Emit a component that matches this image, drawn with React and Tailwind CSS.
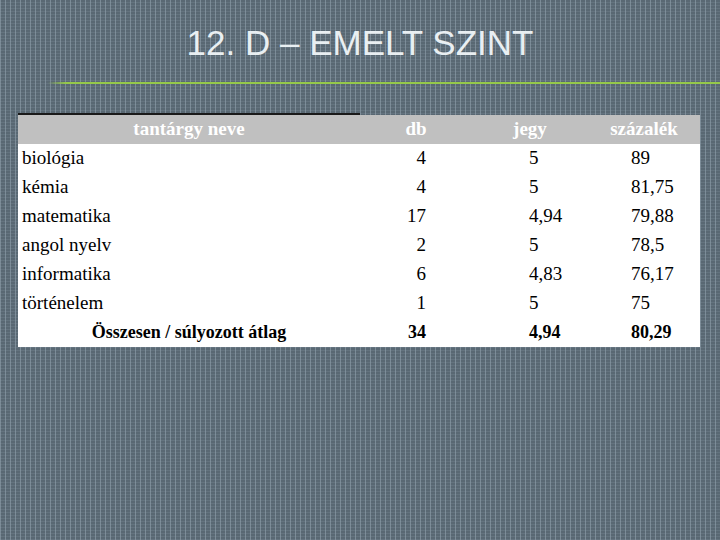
const rows = [
  { name: "biológia", db: "4", jegy: "5", pct: "89" },
  { name: "kémia", db: "4", jegy: "5", pct: "81,75" },
  { name: "matematika", db: "17", jegy: "4,94", pct: "79,88" },
  { name: "angol nyelv", db: "2", jegy: "5", pct: "78,5" },
  { name: "informatika", db: "6", jegy: "4,83", pct: "76,17" },
  { name: "történelem", db: "1", jegy: "5", pct: "75" },
];

const cols = "grid grid-cols-[342px_112px_116px_112px]";

export default function App() {
  return (
    <div className="w-[720px] h-[540px] overflow-hidden bg-[#596873] bg-[repeating-linear-gradient(90deg,rgba(145,162,174,0.6)_0px_1px,transparent_1px_5px),repeating-linear-gradient(0deg,rgba(120,136,148,0.35)_0px_1px,transparent_1px_3px)] flex flex-col">
      <h1 className="mt-[25px] h-[35px] text-center text-[35px] leading-[35px] text-[#e9eff2] font-['Liberation_Sans',Arial,sans-serif]">
        12. D – EMELT SZINT
      </h1>

      <div className="mt-[22px] h-[2px] bg-[linear-gradient(90deg,transparent_0px,transparent_48px,#95c84a_66px,#95c84a_100%)]" />

      <div className="mt-[29px] ml-[18px] w-[682px] font-['Liberation_Serif','Times_New_Roman',serif] text-[19px] text-black">
        <div className="w-[342px] h-[2px] bg-[#1a1a1a]" />
        <div className={`${cols} h-[29px] bg-[#c0c0c0] font-bold text-white items-center`}>
          <div className="text-center">tantárgy neve</div>
          <div className="text-center">db</div>
          <div className="text-center">jegy</div>
          <div className="text-center">százalék</div>
        </div>
        <div className="bg-white">
          {rows.map((r) => (
            <div key={r.name} className={`${cols} h-[29px] items-center`}>
              <div className="pl-[4px]">{r.name}</div>
              <div className="text-right pr-[46px]">{r.db}</div>
              <div className="pl-[57px]">{r.jegy}</div>
              <div className="pl-[43px]">{r.pct}</div>
            </div>
          ))}
          <div className={`${cols} h-[29px] items-center font-bold text-[18px]`}>
            <div className="text-center">Összesen / súlyozott átlag</div>
            <div className="text-right pr-[46px]">34</div>
            <div className="pl-[57px]">4,94</div>
            <div className="pl-[43px]">80,29</div>
          </div>
        </div>
      </div>
    </div>
  );
}
